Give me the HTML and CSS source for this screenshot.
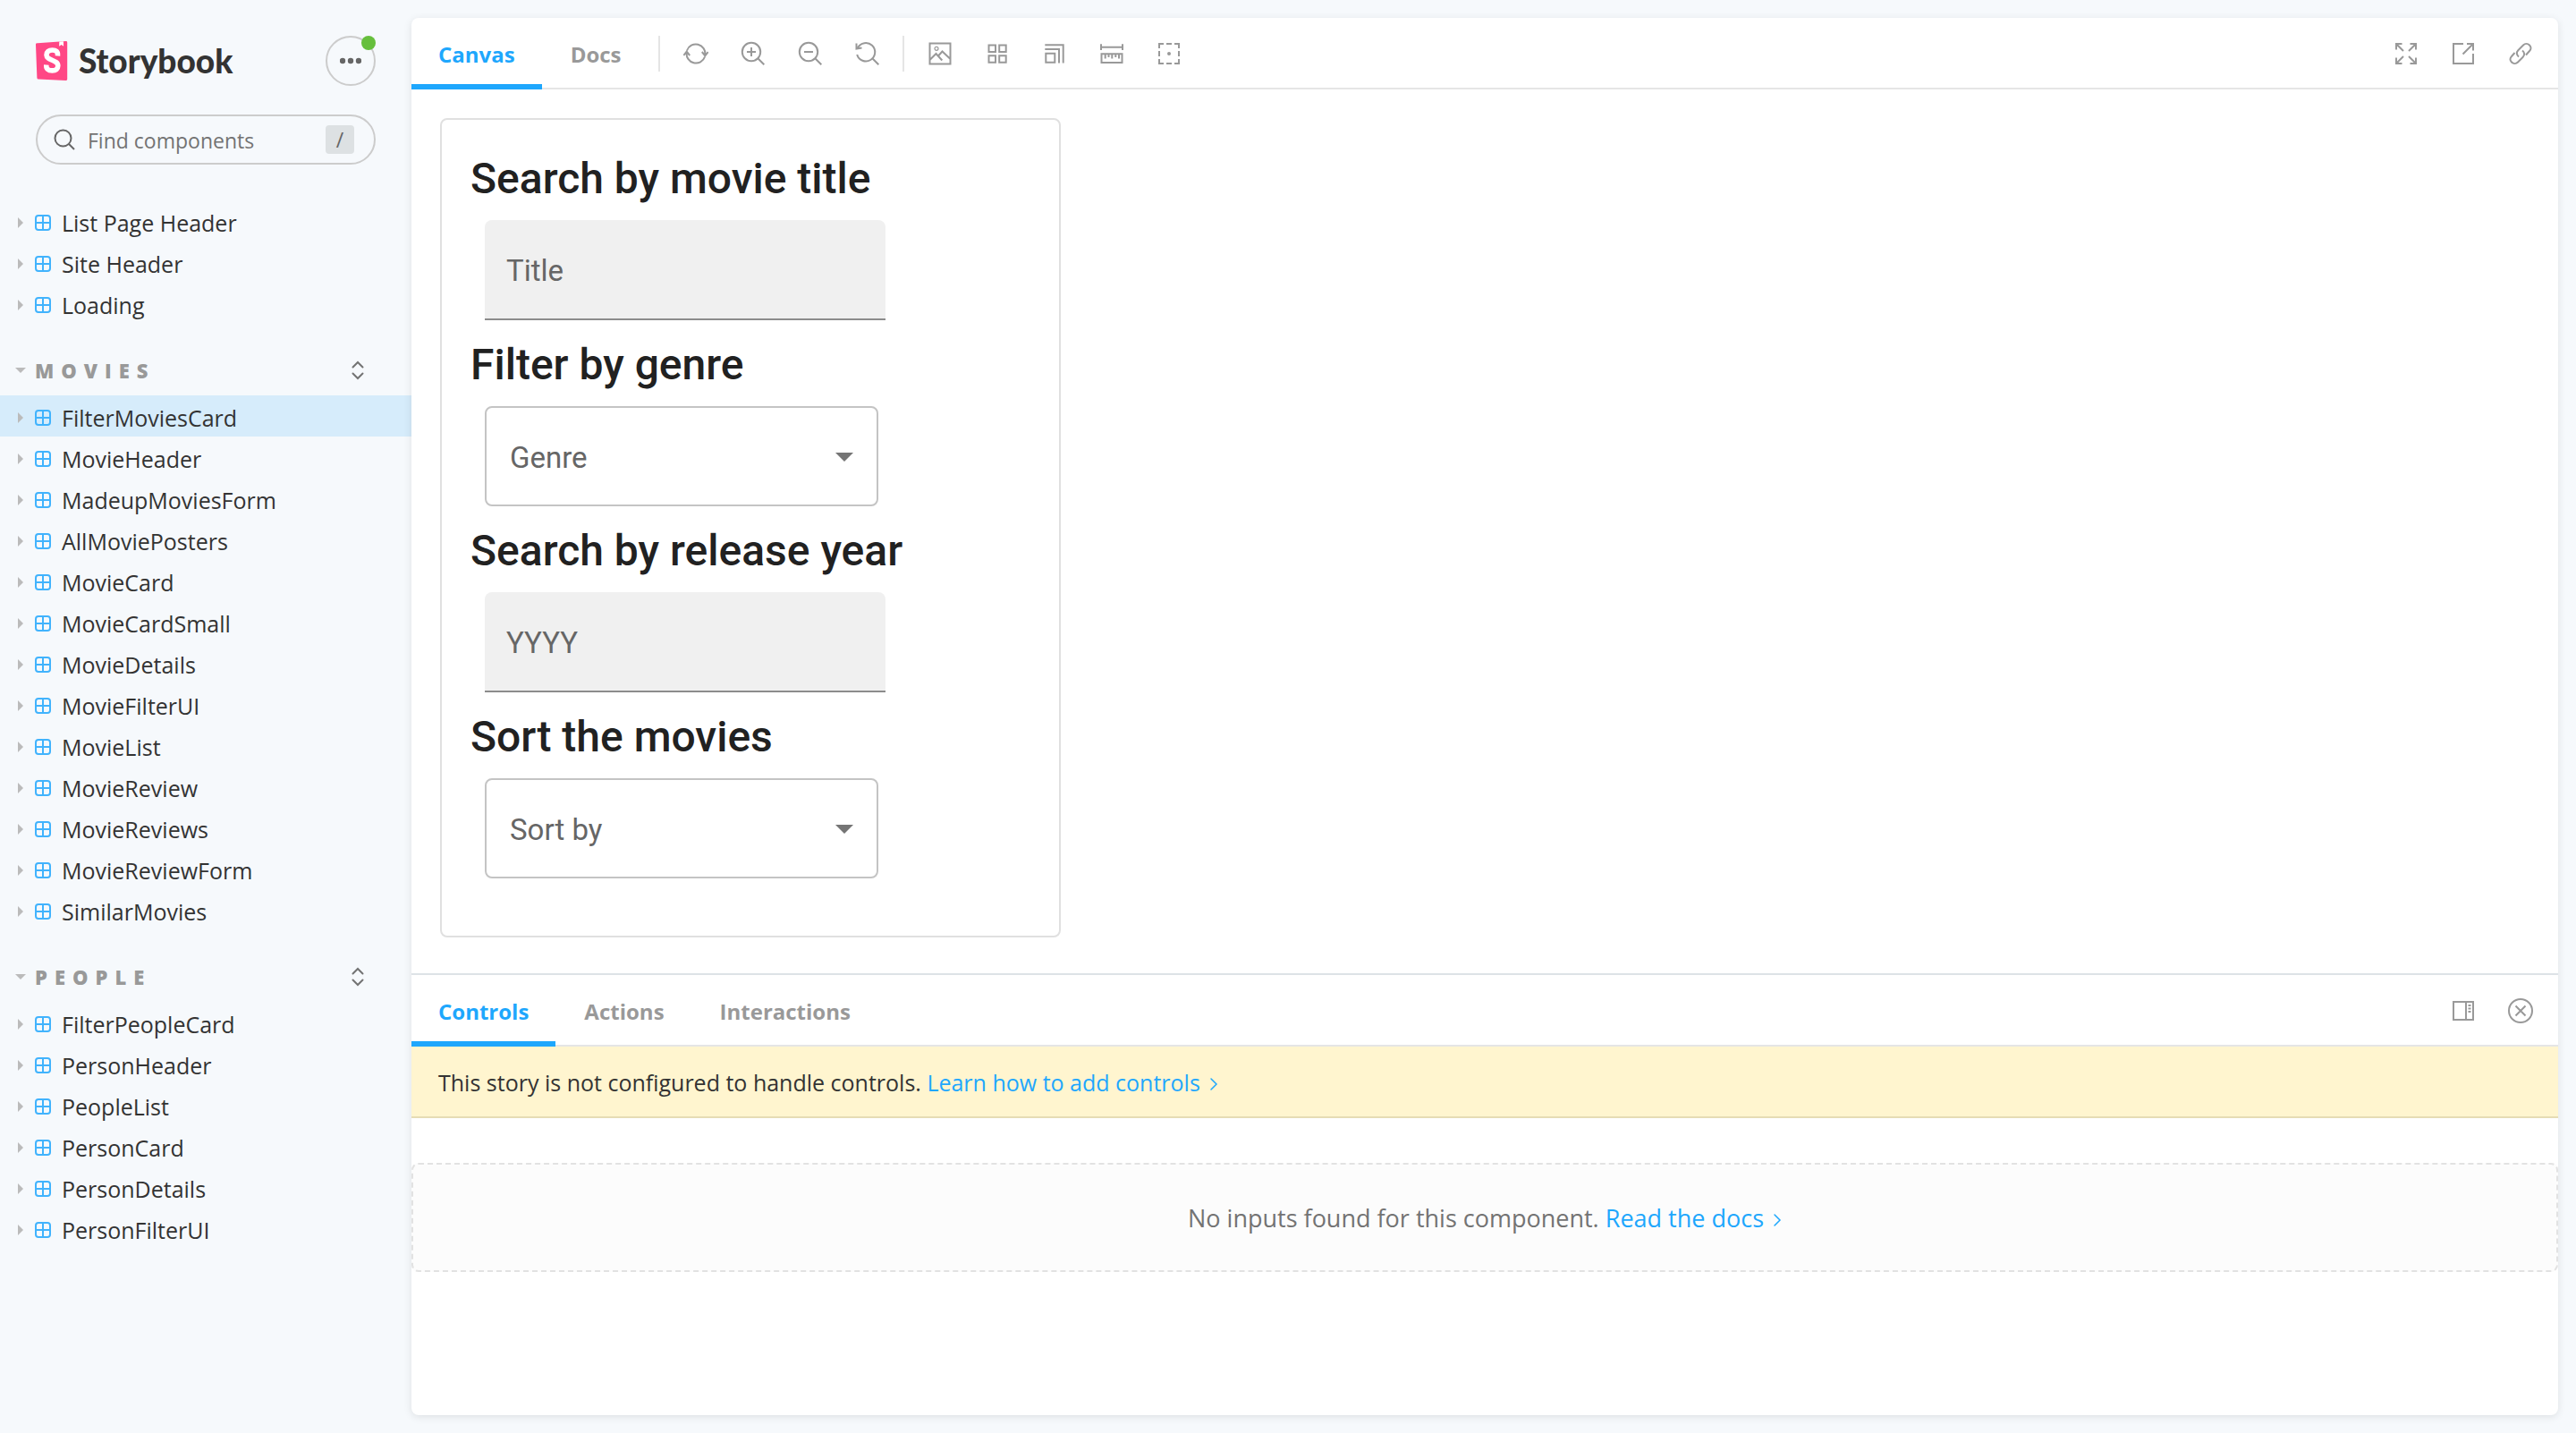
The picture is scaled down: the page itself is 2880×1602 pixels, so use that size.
FILE: index.html
```html
<!DOCTYPE html>
<html lang="en">
<head>
<meta charset="utf-8">
<title>FilterMoviesCard - Storybook</title>
<meta name="viewport" content="width=device-width, initial-scale=1">
<link rel="stylesheet" href="styles.css">
</head>
<body>
<svg class="sprite" aria-hidden="true">
  <symbol id="component" viewBox="0 0 18 18"><rect x="1" y="1" width="16" height="16" rx="3" fill="none" stroke="currentColor" stroke-width="2"/><path d="M9 1v16M1 9h16" stroke="currentColor" stroke-width="2"/></symbol>
  <symbol id="closed" viewBox="0 0 6 12"><path d="M0 0l6 6-6 6z" fill="currentColor"/></symbol>
  <symbol id="open" viewBox="0 0 12 6"><path d="M0 0h12l-6 6z" fill="currentColor"/></symbol>
  <symbol id="expand" viewBox="0 0 14 22"><path d="M1.500 7.500L7 2l5.500 5.500M1.500 14.500L7 20l5.500-5.500" fill="none" stroke="currentColor" stroke-width="2" stroke-linecap="round"/></symbol>
  <symbol id="chevron" viewBox="0 0 10 16"><path d="M2 2l6 6-6 6" fill="none" stroke="currentColor" stroke-width="1.500" stroke-linecap="round"/></symbol>
</svg>
<div class="app">
  <aside class="sidebar">
    <header class="brand">
      <a class="logo" href="#">
        <svg class="logo-mark" viewBox="0 0 36 44" aria-hidden="true">
          <path d="M2 2.200L33.500.1A1.500 1.500 0 0 1 35.200 1.600V42.300A1.600 1.600 0 0 1 33.500 44L3 42.600A1.700 1.700 0 0 1 1.400 41L0 4A1.700 1.700 0 0 1 2 2.200z" fill="#ff4785"/>
          <path d="M26.300.6l4.600-.3.200 5.500-2.400-1.800-2.600 1.700z" fill="#fff"/>
          <path d="M24.500 16.500C25 11.500 22.500 10 18.500 10C14.500 10 12 12 12 15.500C12 22 24.800 20.500 24.800 27.500C24.800 31 22.500 32.900 18.500 32.900C13.500 32.900 11.300 30.500 11.800 26.500" fill="none" stroke="#fff" stroke-width="5.600"/>
        </svg>
        <span>Storybook</span>
      </a>
      <button class="menu" type="button" aria-label="Shortcuts">
        <svg width="24" height="8" viewBox="0 0 24 8" fill="currentColor" aria-hidden="true"><circle cx="3" cy="4" r="3.200"/><circle cx="12" cy="4" r="3.200"/><circle cx="21" cy="4" r="3.200"/></svg>
        <i class="badge"></i>
      </button>
    </header>
    <label class="search">
      <svg width="24" height="24" viewBox="0 0 24 24" fill="none" stroke="currentColor" stroke-width="2" aria-hidden="true"><circle cx="10.500" cy="10.500" r="9"/><path d="M17 17l6 6"/></svg>
      <input type="text" placeholder="Find components" aria-label="Find components">
      <kbd>/</kbd>
    </label>
    <nav class="tree">
      <ul>
        <li><a href="#"><svg class="arrow"><use href="#closed"/></svg><svg class="comp"><use href="#component"/></svg>List Page Header</a></li>
        <li><a href="#"><svg class="arrow"><use href="#closed"/></svg><svg class="comp"><use href="#component"/></svg>Site Header</a></li>
        <li><a href="#"><svg class="arrow"><use href="#closed"/></svg><svg class="comp"><use href="#component"/></svg>Loading</a></li>
      </ul>
      <div class="group">
        <button class="group-name" type="button"><svg class="down"><use href="#open"/></svg>MOVIES</button>
        <button class="expand" type="button" aria-label="Expand all"><svg><use href="#expand"/></svg></button>
      </div>
      <ul>
        <li><a class="selected" href="#"><svg class="arrow"><use href="#closed"/></svg><svg class="comp"><use href="#component"/></svg>FilterMoviesCard</a></li>
        <li><a href="#"><svg class="arrow"><use href="#closed"/></svg><svg class="comp"><use href="#component"/></svg>MovieHeader</a></li>
        <li><a href="#"><svg class="arrow"><use href="#closed"/></svg><svg class="comp"><use href="#component"/></svg>MadeupMoviesForm</a></li>
        <li><a href="#"><svg class="arrow"><use href="#closed"/></svg><svg class="comp"><use href="#component"/></svg>AllMoviePosters</a></li>
        <li><a href="#"><svg class="arrow"><use href="#closed"/></svg><svg class="comp"><use href="#component"/></svg>MovieCard</a></li>
        <li><a href="#"><svg class="arrow"><use href="#closed"/></svg><svg class="comp"><use href="#component"/></svg>MovieCardSmall</a></li>
        <li><a href="#"><svg class="arrow"><use href="#closed"/></svg><svg class="comp"><use href="#component"/></svg>MovieDetails</a></li>
        <li><a href="#"><svg class="arrow"><use href="#closed"/></svg><svg class="comp"><use href="#component"/></svg>MovieFilterUI</a></li>
        <li><a href="#"><svg class="arrow"><use href="#closed"/></svg><svg class="comp"><use href="#component"/></svg>MovieList</a></li>
        <li><a href="#"><svg class="arrow"><use href="#closed"/></svg><svg class="comp"><use href="#component"/></svg>MovieReview</a></li>
        <li><a href="#"><svg class="arrow"><use href="#closed"/></svg><svg class="comp"><use href="#component"/></svg>MovieReviews</a></li>
        <li><a href="#"><svg class="arrow"><use href="#closed"/></svg><svg class="comp"><use href="#component"/></svg>MovieReviewForm</a></li>
        <li><a href="#"><svg class="arrow"><use href="#closed"/></svg><svg class="comp"><use href="#component"/></svg>SimilarMovies</a></li>
      </ul>
      <div class="group">
        <button class="group-name" type="button"><svg class="down"><use href="#open"/></svg>PEOPLE</button>
        <button class="expand" type="button" aria-label="Expand all"><svg><use href="#expand"/></svg></button>
      </div>
      <ul>
        <li><a href="#"><svg class="arrow"><use href="#closed"/></svg><svg class="comp"><use href="#component"/></svg>FilterPeopleCard</a></li>
        <li><a href="#"><svg class="arrow"><use href="#closed"/></svg><svg class="comp"><use href="#component"/></svg>PersonHeader</a></li>
        <li><a href="#"><svg class="arrow"><use href="#closed"/></svg><svg class="comp"><use href="#component"/></svg>PeopleList</a></li>
        <li><a href="#"><svg class="arrow"><use href="#closed"/></svg><svg class="comp"><use href="#component"/></svg>PersonCard</a></li>
        <li><a href="#"><svg class="arrow"><use href="#closed"/></svg><svg class="comp"><use href="#component"/></svg>PersonDetails</a></li>
        <li><a href="#"><svg class="arrow"><use href="#closed"/></svg><svg class="comp"><use href="#component"/></svg>PersonFilterUI</a></li>
      </ul>
    </nav>
  </aside>

  <main class="main">
    <div class="bar">
      <div class="tabs">
        <button class="tab active" type="button">Canvas</button>
        <button class="tab" type="button">Docs</button>
      </div>
      <div class="tools divided">
        <button type="button" aria-label="Remount component"><svg viewBox="0 0 28 28"><path d="M4 10.500A10.500 10.500 0 0 1 24.300 15.500M24 17.500A10.500 10.500 0 0 1 3.700 12.500M20.800 12l3.500 4.300 3.400-4.300M.3 16l3.400-4.300L7.200 16"/></svg></button>
        <button type="button" aria-label="Zoom in"><svg viewBox="0 0 28 28"><circle cx="12" cy="12" r="10.200"/><path d="M19.300 19.300l7 7M12 7v10M7 12h10"/></svg></button>
        <button type="button" aria-label="Zoom out"><svg viewBox="0 0 28 28"><circle cx="12" cy="12" r="10.200"/><path d="M19.300 19.300l7 7M7 12h10"/></svg></button>
        <button type="button" aria-label="Reset zoom"><svg viewBox="0 0 28 28"><path d="M3 7.500A10.200 10.200 0 1 1 2.200 15M19.300 19.300l7 7M1.500 2.500V8.500L7.500 7.500"/></svg></button>
      </div>
      <div class="tools divided">
        <button type="button" aria-label="Change the background"><svg viewBox="0 0 28 28"><path d="M2.500 2.500h23v23h-23zM3 20.500l6.500-6.500 6.800 7.500M12 16.500l4.500-5L25 19.500"/><circle cx="10" cy="8.300" r="2" stroke-width="1.200"/></svg></button>
        <button type="button" aria-label="Apply a grid"><svg viewBox="0 0 28 28"><path d="M4.500 4.500H12V12H4.500zM16.200 4.500h7.500V12h-7.500zM4.500 16.200H12v7.500H4.500zM16.200 16.200h7.500v7.500h-7.500z"/></svg></button>
        <button type="button" aria-label="Change the viewport"><svg viewBox="0 0 28 28"><path d="M4.300 13.700h10v10h-10zM3.300 9H19v15.500M3.300 4.300h20.400v20.200"/></svg></button>
        <button type="button" aria-label="Enable measure"><svg viewBox="0 0 28 28"><path d="M2.500 14.300h23v9.700h-23zM6.700 14v5.500M10.500 14v4M14.300 14v5.500M18.300 14v4M22 14v5.500M2 6.700h24M2 3.300v6.700M26 3.300v6.700"/></svg></button>
        <button type="button" aria-label="Apply outlines"><svg viewBox="0 0 28 28"><path d="M3 8V3h5M11 3h6M20 3h5v5M25 11v6M25 20v5h-5M17 25h-6M8 25H3v-5M3 17v-6"/><circle cx="14" cy="14" r="1"/></svg></button>
      </div>
      <div class="tools end">
        <button type="button" aria-label="Go full screen"><svg viewBox="0 0 28 28"><path d="M3 9.500V3h6.500M3 3l8 8M18.500 3H25v6.500M25 3l-8 8M3 18.500V25h6.500M3 25l8-8M25 18.500V25h-6.500M25 25l-8-8"/></svg></button>
        <button type="button" aria-label="Open canvas in new tab"><svg viewBox="0 0 28 28"><path d="M14 3H3v22h22V14M18 3h7v7.500M25 3L13.500 14.500"/></svg></button>
        <button type="button" aria-label="Copy canvas link"><svg viewBox="0 0 28 28"><path d="M12 17.500C9.500 15.500 9 12.500 11.500 10L17 4.500C19 2.500 22 2.500 24 4.500S26 9 24 11L20 15.500M16 10.500C18.500 12.500 19 15.500 16.500 18L11 23.500C9 25.500 6 25.500 4 23.500S2 19 4 17L7.500 13"/></svg></button>
      </div>
    </div>

    <section class="canvas">
      <form class="card">
        <h2><label for="title">Search by movie title</label></h2>
        <input class="field" id="title" type="text" placeholder="Title">
        <h2><label for="genre">Filter by genre</label></h2>
        <div class="select">
          <select id="genre"><option>Genre</option></select>
          <svg viewBox="0 0 20 10" aria-hidden="true"><path d="M0 0h20L10 10z"/></svg>
        </div>
        <h2><label for="year">Search by release year</label></h2>
        <input class="field" id="year" type="text" placeholder="YYYY">
        <h2><label for="sort">Sort the movies</label></h2>
        <div class="select">
          <select id="sort"><option>Sort by</option></select>
          <svg viewBox="0 0 20 10" aria-hidden="true"><path d="M0 0h20L10 10z"/></svg>
        </div>
      </form>
    </section>

    <section class="panel">
      <div class="bar">
        <div class="tabs">
          <button class="tab active" type="button">Controls</button>
          <button class="tab" type="button">Actions</button>
          <button class="tab" type="button">Interactions</button>
        </div>
        <div class="tools end">
          <button type="button" aria-label="Change addon orientation"><svg viewBox="0 0 28 28"><path d="M3 4h22v20H3zM17 4v20M19.500 8h3M19.500 11.500h3M19.500 15h3"/></svg></button>
          <button type="button" aria-label="Hide addons"><svg viewBox="0 0 28 28"><circle cx="14" cy="14" r="13"/><path d="M8.500 8.500l11 11M19.500 8.500l-11 11"/></svg></button>
        </div>
      </div>
      <p class="notice">This story is not configured to handle controls. <a href="#">Learn how to add controls<svg><use href="#chevron"/></svg></a></p>
      <p class="empty">No inputs found for this component. <a href="#">Read the docs<svg><use href="#chevron"/></svg></a></p>
    </section>
  </main>
</div>
</body>
</html>
```

FILE: styles.css
```css
*, *::before, *::after { box-sizing: border-box; }

body {
  margin: 0;
  background: #f6f9fc;
  color: #333;
  font-family: "Open Sans", "Noto Sans", sans-serif;
  font-size: 25px;
}

button, input, select { font: inherit; color: inherit; }
button { border: 0; padding: 0; background: none; cursor: pointer; }
a { color: #1ea7fd; text-decoration: none; }
ul { list-style: none; margin: 0; padding: 0; }
svg { flex: none; }
.sprite { display: none; }

.app { display: flex; min-height: 100vh; }

/* Sidebar */
.sidebar { flex: none; width: 460px; padding-top: 40px; }

.brand {
  display: flex;
  align-items: center;
  justify-content: space-between;
  padding: 0 40px;
}

.logo {
  display: flex;
  align-items: center;
  gap: 12px;
  color: #333;
  font-family: Lato, sans-serif;
  font-weight: 900;
  font-size: 37px;
  line-height: 44px;
}
.logo-mark { width: 36px; height: 44px; }

.menu {
  position: relative;
  display: grid;
  place-items: center;
  width: 56px;
  height: 56px;
  border: 2px solid #ccc;
  border-radius: 50%;
  color: #666;
}
.badge {
  position: absolute;
  top: -2px;
  right: -2px;
  width: 16px;
  height: 16px;
  border-radius: 50%;
  background: #66bf3c;
}

.search {
  display: flex;
  align-items: center;
  gap: 14px;
  height: 56px;
  margin: 32px 40px 40px;
  padding: 0 22px 0 18px;
  border: 2px solid #ccc;
  border-radius: 28px;
  color: #666;
}
.search input {
  flex: 1;
  min-width: 0;
  padding: 2px 0 0;
  border: 0;
  background: none;
  font-size: 23px;
}
.search input::placeholder { color: #737373; }
.search kbd {
  width: 32px;
  height: 32px;
  border-radius: 4px;
  background: #dde1e3;
  font: inherit;
  font-size: 23px;
  line-height: 32px;
  text-align: center;
}

.tree a {
  display: flex;
  align-items: center;
  height: 46px;
  padding: 3px 0 0 20px;
  color: #333;
}
.tree .selected { background: #d6ecfb; }
.arrow { width: 6px; height: 12px; margin-right: 13px; color: #bbb; }
.comp { width: 18px; height: 18px; margin-right: 12px; color: #41b3fd; }

.group {
  display: flex;
  align-items: center;
  justify-content: space-between;
  height: 56px;
  margin-top: 24px;
  padding: 0 53px 0 17px;
  color: #999;
}
.group-name {
  display: flex;
  align-items: center;
  gap: 10px;
  font-weight: 800;
  font-size: 22px;
  letter-spacing: 8px;
}
.down { width: 12px; height: 6px; color: #bbb; }
.expand { display: flex; color: #737373; }
.expand svg { width: 14px; height: 22px; }

/* Main area */
.main {
  flex: 1;
  min-width: 0;
  display: flex;
  flex-direction: column;
  margin: 20px 20px 20px 0;
  border-radius: 8px;
  background: #fff;
  box-shadow: 0 2px 10px rgba(0, 0, 0, .1);
}

.bar {
  display: flex;
  align-items: stretch;
  height: 80px;
  border-bottom: 2px solid #e5e5e5;
}
.tabs, .tools { display: flex; margin-bottom: -2px; }
.tabs { gap: 2px; }
.tab {
  padding: 6px 30px 0;
  border-bottom: 6px solid transparent;
  color: #999;
  font-weight: 700;
  font-size: 24px;
}
.tab.active { border-color: #1ea7fd; color: #1ea7fd; }

.tools { align-items: center; gap: 8px; color: #999; }
.tools.divided::before {
  content: "";
  width: 2px;
  height: 40px;
  margin: 0 4px 0 11px;
  background: #e5e5e5;
}
.tools.end { margin-left: auto; padding-right: 14px; }
.tools button { display: grid; place-items: center; width: 56px; height: 56px; }
.tools svg {
  width: 28px;
  height: 28px;
  fill: none;
  stroke: currentColor;
  stroke-width: 2;
}

.canvas {
  padding: 32px 32px 40px;
  font-family: Roboto, sans-serif;
}
.card {
  width: 694px;
  max-width: 100%;
  padding: 32px 32px 48px;
  border: 2px solid #e0e0e0;
  border-radius: 8px;
}
.card h2 {
  margin: 0;
  padding-top: 4px;
  color: #212121;
  font-weight: 500;
  font-size: 48px;
  line-height: 60px;
}
.field, .select { display: block; height: 112px; margin: 16px; font-size: 33px; }
.field {
  width: 448px;
  padding: 2px 24px 0;
  border: 0;
  border-bottom: 2px solid #8c8c8c;
  border-radius: 8px 8px 0 0;
  background: #f0f0f0;
}
.field::placeholder { color: #666; opacity: 1; }
.select { position: relative; width: 440px; }
.select select {
  width: 100%;
  height: 100%;
  padding: 2px 64px 0 26px;
  border: 2px solid #c4c4c4;
  border-radius: 8px;
  background: #fff;
  color: #666;
  appearance: none;
}
.select svg {
  position: absolute;
  top: 52px;
  right: 28px;
  width: 20px;
  height: 10px;
  fill: #757575;
  pointer-events: none;
}

/* Addons panel */
.panel { flex: 1; border-top: 2px solid #dde2e6; }
.notice {
  margin: 0;
  padding: 2px 30px 0;
  border-bottom: 2px solid #e6dcb4;
  background: #fff5cf;
  line-height: 76px;
}
.empty {
  margin: 50px 0 0;
  padding-top: 2px;
  border: 2px dashed #e2e2e2;
  border-radius: 8px;
  background: #fcfcfc;
  color: #737373;
  font-size: 27px;
  line-height: 116px;
  text-align: center;
}
.panel a svg { width: 10px; height: 16px; margin-left: 10px; }
```
